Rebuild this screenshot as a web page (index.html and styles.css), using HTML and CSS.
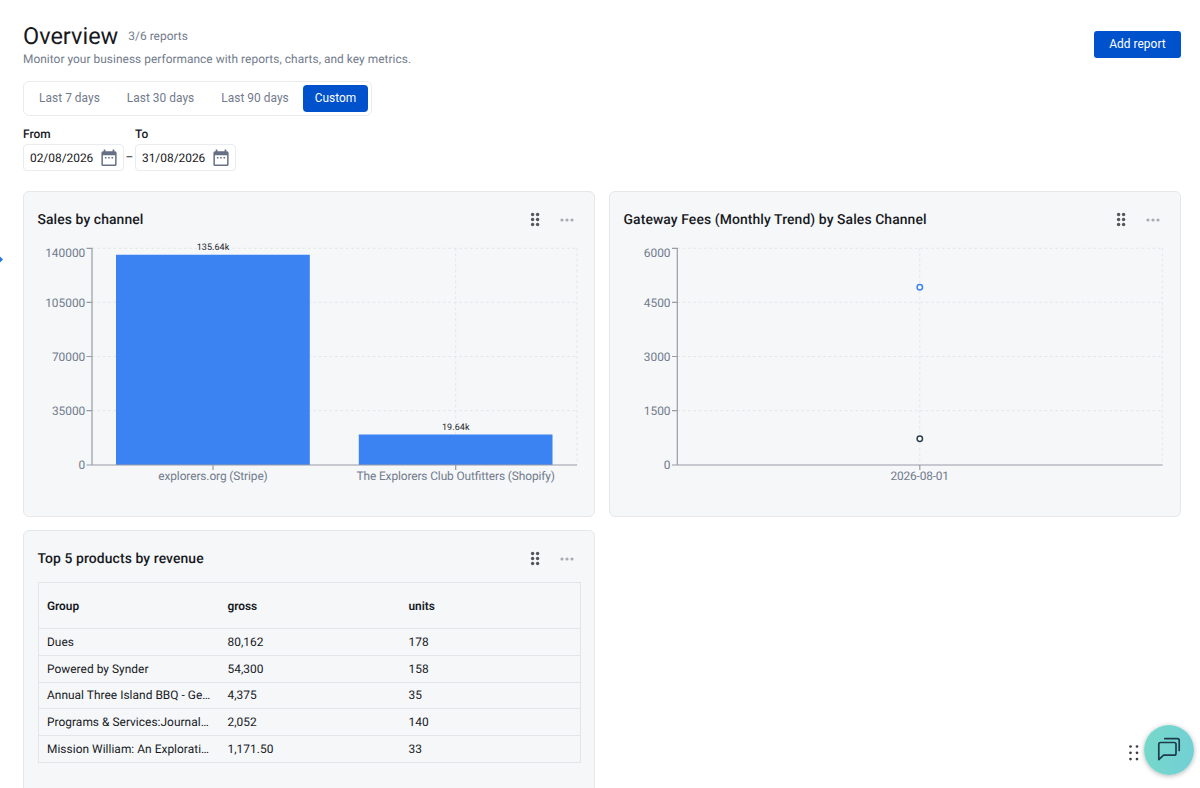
FILE: index.html
```html
<!DOCTYPE html>
<html lang="en">
<head>
<meta charset="utf-8">
<title>Overview</title>
<link rel="stylesheet" href="styles.css">
</head>
<body>
<svg class="defs" width="0" height="0" aria-hidden="true">
  <symbol id="grip" viewBox="0 0 10 15"><g fill="#55575c"><circle cx="2.600" cy="2.500" r="1.700"/><circle cx="7.600" cy="2.500" r="1.700"/><circle cx="2.600" cy="7.500" r="1.700"/><circle cx="7.600" cy="7.500" r="1.700"/><circle cx="2.600" cy="12.500" r="1.700"/><circle cx="7.600" cy="12.500" r="1.700"/></g></symbol>
  <symbol id="more" viewBox="0 0 14 4"><g fill="#a9acb1"><circle cx="2" cy="2" r="1.600"/><circle cx="7" cy="2" r="1.600"/><circle cx="12" cy="2" r="1.600"/></g></symbol>
  <symbol id="calendar" viewBox="0 0 16 18"><path fill="#667085" fill-rule="evenodd" d="M2.700 0.500h1.700v1.700h7.200V.5h1.700v1.700h.7a1.600 1.600 0 0 1 1.600 1.600v11.600a1.600 1.600 0 0 1-1.600 1.600H2a1.600 1.600 0 0 1-1.600-1.600V3.800A1.600 1.600 0 0 1 2 2.200h.7zM1.900 6.200v9.300h12.200V6.200z"/><path fill="#667085" d="M3.900 8h1.600v1.500H3.900zM7.200 8h1.600v1.500H7.200zM10.500 8h1.600v1.500h-1.600z"/></symbol>
</svg>
<main class="page">
  <header class="header">
    <div>
      <div class="title-row"><h1 class="title">Overview</h1><span class="count">3/6 reports</span></div>
      <p class="subtitle">Monitor your business performance with reports, charts, and key metrics.</p>
    </div>
    <button class="add">Add report</button>
  </header>
  <div class="tabs">
    <button class="tab">Last 7 days</button>
    <button class="tab">Last 30 days</button>
    <button class="tab">Last 90 days</button>
    <button class="tab tab-active">Custom</button>
  </div>
  <div class="dates">
    <div class="field"><span class="label">From</span><div class="date"><span>02/08/2026</span><svg width="16" height="18"><use href="#calendar"/></svg></div></div>
    <span class="dash">–</span>
    <div class="field"><span class="label">To</span><div class="date"><span>31/08/2026</span><svg width="16" height="18"><use href="#calendar"/></svg></div></div>
  </div>
  <section class="cards">
    <article class="card">
      <div class="card-head"><h2 class="card-title">Sales by channel</h2><svg class="grip" width="10" height="15"><use href="#grip"/></svg><svg class="more" width="14" height="4"><use href="#more"/></svg></div>
      <svg class="chart" width="544" height="250" viewBox="37 240 544 250">
        <g class="grid"><path d="M92 248.300H577M92 302.300H577M92 356.500H577M92 410.700H577M213 248V465M455.700 248V465M577 248V465"/></g>
        <path class="bar" d="M116 254.700H309.800V465H116zM358.800 434.500H552.500V465H358.800z"/>
        <path class="axis" d="M86.500 248.300H92V465M86.500 302.300H92M86.500 356.500H92M86.500 410.700H92M86.500 465H577M213 465V470M455.700 465V470"/>
        <g class="tick tick-end">
          <text x="85.300" y="256.700">140000</text><text x="85.300" y="306.500">105000</text><text x="85.300" y="360.700">70000</text><text x="85.300" y="415">35000</text><text x="85.300" y="469.200">0</text>
        </g>
        <g class="tick tick-mid">
          <text x="213" y="480.200" textLength="109.500">explorers.org (Stripe)</text><text x="455.700" y="480.200" textLength="198.500">The Explorers Club Outfitters (Shopify)</text>
        </g>
        <g class="value"><text x="213" y="250.300" textLength="32.500">135.64k</text><text x="455.700" y="430" textLength="27.500">19.64k</text></g>
      </svg>
    </article>
    <article class="card">
      <div class="card-head"><h2 class="card-title">Gateway Fees (Monthly Trend) by Sales Channel</h2><svg class="grip" width="10" height="15"><use href="#grip"/></svg><svg class="more" width="14" height="4"><use href="#more"/></svg></div>
      <svg class="chart" width="544" height="250" viewBox="623 240 544 250">
        <g class="grid"><path d="M677.300 248.300H1162.500M677.300 302.300H1162.500M677.300 356.500H1162.500M677.300 410.700H1162.500M919.800 248V465M1162.300 248V465"/></g>
        <path class="axis" d="M672 248.300H677.300V465M672 302.300H677.300M672 356.500H677.300M672 410.700H677.300M672 465H1162.500M919.800 465V470"/>
        <circle class="dot dot-blue" cx="919.800" cy="287.200" r="2.700"/>
        <circle class="dot dot-dark" cx="919.800" cy="438.700" r="2.700"/>
        <g class="tick tick-end">
          <text x="670.500" y="256.700">6000</text><text x="670.500" y="306.500">4500</text><text x="670.500" y="360.700">3000</text><text x="670.500" y="415">1500</text><text x="670.500" y="469.200">0</text>
        </g>
        <g class="tick tick-mid"><text x="919.800" y="480.200" textLength="58.500">2026-08-01</text></g>
      </svg>
    </article>
    <article class="card">
      <div class="card-head"><h2 class="card-title">Top 5 products by revenue</h2><svg class="grip" width="10" height="15"><use href="#grip"/></svg><svg class="more" width="14" height="4"><use href="#more"/></svg></div>
      <div class="table">
        <div class="row row-head"><span>Group</span><span>gross</span><span>units</span></div>
        <div class="row"><span>Dues</span><span>80,162</span><span>178</span></div>
        <div class="row"><span>Powered by Synder</span><span>54,300</span><span>158</span></div>
        <div class="row"><span>Annual Three Island BBQ - Ge…</span><span>4,375</span><span>35</span></div>
        <div class="row"><span>Programs &amp; Services:Journal…</span><span>2,052</span><span>140</span></div>
        <div class="row"><span>Mission William: An Explorati…</span><span>1,171.50</span><span>33</span></div>
      </div>
    </article>
  </section>
</main>
<span class="edge"></span>
<div class="chat">
  <svg width="12" height="18" viewBox="0 0 12 18" fill="#3c3e42"><circle cx="2.500" cy="2.500" r="1.350"/><circle cx="9" cy="2.500" r="1.350"/><circle cx="2.500" cy="8.800" r="1.350"/><circle cx="9" cy="8.800" r="1.350"/><circle cx="2.500" cy="15.100" r="1.350"/><circle cx="9" cy="15.100" r="1.350"/></svg>
  <button class="bubble" aria-label="Chat"><svg width="26" height="26" viewBox="0 0 26 26" fill="none" stroke="#1d3c4b" stroke-width="1.700" stroke-linejoin="round" stroke-linecap="round"><path d="M2.800 22.600V7.200Q2.800 5.500 4.500 5.500H18.300Q20 5.500 20 7.200V16.500Q20 18.200 18.300 18.200H7.600z"/><path d="M8.800 1.700H21.500Q23.200 1.700 23.200 3.400V13.500"/></svg></button>
</div>
</body>
</html>
```
FILE: styles.css
```css
* { box-sizing: border-box; }
body {
  margin: 0;
  height: 788px;
  overflow: hidden;
  background: #fff;
  color: #17191e;
  font: 11.9px/16px Roboto, sans-serif;
  letter-spacing: 0.04px;
  text-rendering: geometricPrecision;
}
h1, h2, p { margin: 0; font-weight: 400; }
button { border: 0; padding: 0; background: none; font: inherit; letter-spacing: inherit; }
.defs { position: absolute; }
.page { height: 788px; overflow: hidden; padding: 21px 19px 0 23px; }
.header { display: flex; justify-content: space-between; align-items: flex-start; height: 60px; }
.title-row { display: flex; align-items: center; gap: 10px; height: 30px; }
.title { font-size: 23.5px; line-height: 30px; letter-spacing: 0; }
.count { color: #727b8c; }
.subtitle { color: #727b8c; }
.add { width: 87px; height: 27px; margin-top: 10px; padding-bottom: 1px; border-radius: 3px; background: #0052cc; color: #fff; }
.tabs { display: flex; width: 349px; height: 35px; padding: 3px; border: 1px solid #e9ebee; border-radius: 6px; }
.tab { height: 27px; padding: 0 0 1px; color: #727b8c; white-space: nowrap; }
.tab:nth-child(1) { width: 85px; }
.tab:nth-child(2) { width: 97px; }
.tab:nth-child(3) { width: 92px; }
.tab-active { width: 65px; margin-left: 2px; border-radius: 4px; background: #0052cc; color: #fff; }
.dates { display: flex; align-items: flex-end; margin-top: 10px; height: 45px; }
.field { display: flex; flex-direction: column; gap: 2px; width: 101px; }
.label { font-weight: 500; }
.date { display: flex; justify-content: space-between; align-items: center; height: 27px; padding: 0 6px; border: 1px solid #e9ebee; border-radius: 4px; letter-spacing: 0; }
.dash { width: 11px; height: 27px; line-height: 27px; text-align: center; }
.cards { display: grid; grid-template-columns: 572px 572px; grid-auto-rows: 326px; gap: 13px 14px; margin-top: 20px; }
.card { padding: 13px 14px 14px; border: 1px solid #e5e8ea; border-radius: 6px; background: #f5f7f9; }
.card-head { display: flex; align-items: center; height: 29px; padding-right: 6px; }
.card-title { flex: 1; margin-left: -0.5px; font-size: 13.9px; font-weight: 500; letter-spacing: 0.1px; }
.more { margin-left: 20px; }
.chart { display: block; margin: 6px -1px 0; }
.grid path { fill: none; stroke: #e3e6e9; stroke-dasharray: 2.700 2.700; }
.axis { fill: none; stroke: #989ca5; stroke-width: 1.200; }
.bar { fill: #3b82f3; }
.tick { fill: #727b8c; font-size: 11.9px; letter-spacing: 0; }
.tick-end { text-anchor: end; }
.tick-mid, .value { text-anchor: middle; }
.value { fill: #24262b; font-size: 9px; letter-spacing: 0; }
.dot { fill: #fff; stroke-width: 1.500; }
.dot-blue { stroke: #3b82f3; }
.dot-dark { stroke: #2c3e50; }
.table { width: 543px; margin-top: 9px; border: 1px solid #e3e5e9; }
.row { display: grid; grid-template-columns: 180.500px 181px 1fr; align-items: center; height: 26.750px; padding-left: 8px; border-top: 1px solid #e3e5e9; white-space: nowrap; }
.row-head { height: 45px; border-top: 0; font-weight: 600; letter-spacing: -0.05px; }
.edge { position: absolute; left: -3px; top: 257px; width: 5px; height: 5px; background: #2878e0; transform: rotate(45deg); }
.chat { position: absolute; right: 6px; top: 725px; display: flex; align-items: center; gap: 4px; }
.chat > svg { margin-top: 6px; }
.bubble { display: flex; align-items: center; justify-content: center; width: 50px; height: 50px; border-radius: 50%; background: linear-gradient(100deg, #76d9c9, #72cfd5); box-shadow: 0 1px 5px rgba(0, 0, 0, 0.3); }
```
